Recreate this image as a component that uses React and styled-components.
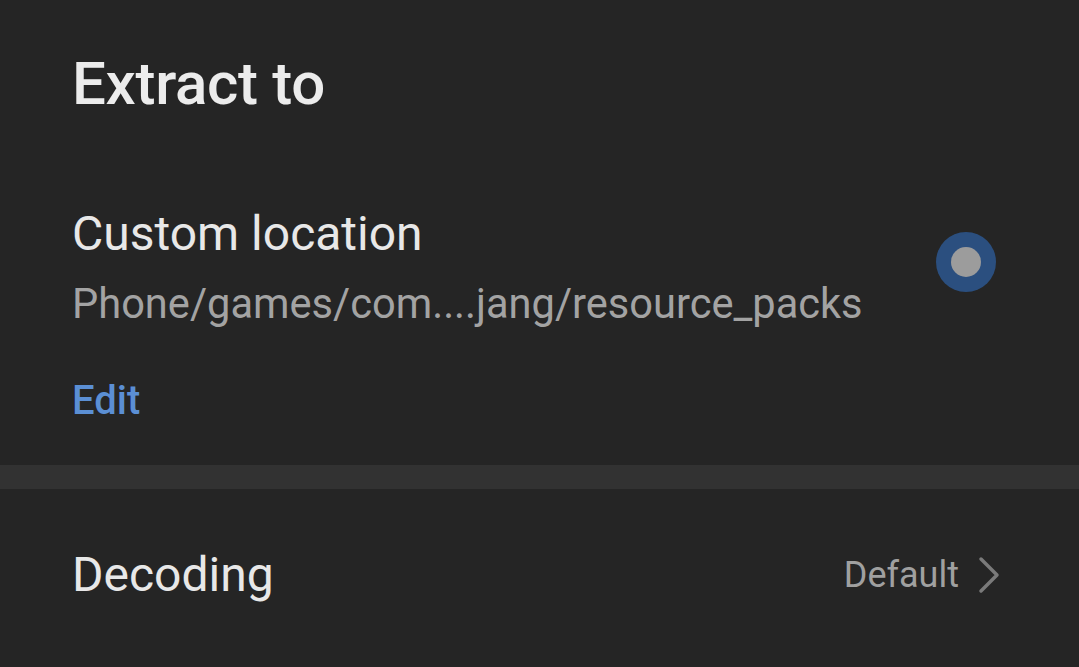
import React from 'react';
import styled, { createGlobalStyle } from 'styled-components';

const GlobalStyle = createGlobalStyle`
  html, body {
    margin: 0;
    padding: 0;
    background: #252525;
  }
  body {
    font-family: Roboto, "Noto Sans", "Liberation Sans", sans-serif;
  }
`;

const Page = styled.div`
  width: 1079px;
  height: 667px;
  background: #252525;
  overflow: hidden;
  display: flex;
  flex-direction: column;
`;

const Section = styled.section`
  padding: 0 84px 0 72px;
  display: flex;
  flex-direction: column;
`;

const Title = styled.h1`
  margin: 0;
  padding-top: 48px;
  font-size: 60px;
  font-weight: 500;
  line-height: 72px;
  color: #ececec;
  letter-spacing: -0.3px;
`;

const OptionRow = styled.div`
  display: flex;
  align-items: flex-start;
  justify-content: space-between;
  margin-top: 86px;
`;

const OptionText = styled.div`
  display: flex;
  flex-direction: column;
`;

const Label = styled.div`
  font-size: 48px;
  line-height: 56px;
  color: #e8e8e8;
`;

const Path = styled.div`
  margin-top: 17px;
  font-size: 41.6px;
  line-height: 50px;
  color: #a3a3a3;
`;

const EditLink = styled.a`
  margin-top: 48px;
  font-size: 40px;
  line-height: 48px;
  font-weight: 500;
  color: #5b8fd4;
  text-decoration: none;
  cursor: pointer;
`;

const Radio = styled.span`
  width: 60px;
  height: 60px;
  border-radius: 50%;
  background: #2b4f7f;
  display: flex;
  align-items: center;
  justify-content: center;
  margin-top: 26px;
  margin-right: -1px;

  &::after {
    content: '';
    width: 30px;
    height: 30px;
    border-radius: 50%;
    background: #9c9c9c;
  }
`;

const Divider = styled.div`
  height: 24px;
  margin-top: 40px;
  background: #323232;
`;

const SettingRow = styled.div`
  display: flex;
  align-items: center;
  justify-content: space-between;
  padding: 0 78px 0 72px;
  height: 172px;
`;

const SettingValue = styled.div`
  display: flex;
  align-items: center;
  gap: 18px;
  font-size: 36px;
  color: #a0a0a0;
`;

function Chevron() {
  return (
    <svg width="24" height="38" viewBox="0 0 24 38" fill="none">
      <path d="M4 3 L20 19 L4 35" stroke="#7a7a7a" strokeWidth="3.5" strokeLinecap="round" strokeLinejoin="round" />
    </svg>
  );
}

export default function App() {
  return (
    <>
      <GlobalStyle />
      <Page>
        <Section>
          <Title>Extract to</Title>
          <OptionRow>
            <OptionText>
              <Label>Custom location</Label>
              <Path>Phone/games/com....jang/resource_packs</Path>
              <EditLink>Edit</EditLink>
            </OptionText>
            <Radio />
          </OptionRow>
        </Section>
        <Divider />
        <SettingRow>
          <Label>Decoding</Label>
          <SettingValue>
            Default
            <Chevron />
          </SettingValue>
        </SettingRow>
      </Page>
    </>
  );
}
